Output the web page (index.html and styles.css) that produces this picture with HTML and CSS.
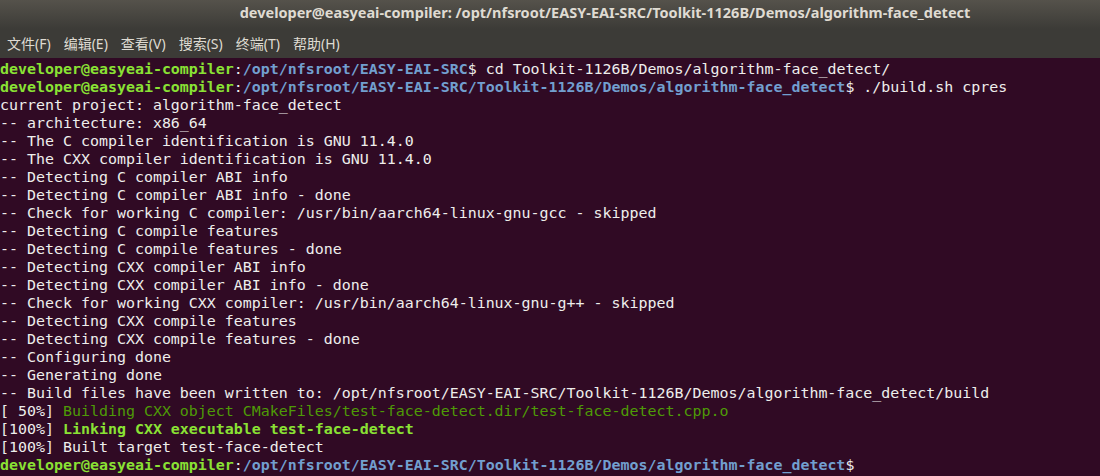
FILE: index.html
```html
<!DOCTYPE html>
<html lang="zh-CN">
<head>
    <meta charset="UTF-8">
    <title>developer@easyeai-compiler: /opt/nfsroot/EASY-EAI-SRC/Toolkit-1126B/Demos/algorithm-face_detect</title>
    <link rel="stylesheet" href="styles.css">
</head>
<body>
    <div class="window">
        <div class="titlebar">developer@easyeai-compiler: /opt/nfsroot/EASY-EAI-SRC/Toolkit-1126B/Demos/algorithm-face_detect</div>
        <nav class="menubar">
            <span class="menu-item">文件(F)</span>
            <span class="menu-item">编辑(E)</span>
            <span class="menu-item">查看(V)</span>
            <span class="menu-item">搜索(S)</span>
            <span class="menu-item">终端(T)</span>
            <span class="menu-item">帮助(H)</span>
        </nav>
        <pre class="terminal"><span class="user">developer@easyeai-compiler</span>:<span class="path">/opt/nfsroot/EASY-EAI-SRC</span>$ cd Toolkit-1126B/Demos/algorithm-face_detect/
<span class="user">developer@easyeai-compiler</span>:<span class="path">/opt/nfsroot/EASY-EAI-SRC/Toolkit-1126B/Demos/algorithm-face_detect</span>$ ./build.sh cpres
current project: algorithm-face_detect
-- architecture: x86_64
-- The C compiler identification is GNU 11.4.0
-- The CXX compiler identification is GNU 11.4.0
-- Detecting C compiler ABI info
-- Detecting C compiler ABI info - done
-- Check for working C compiler: /usr/bin/aarch64-linux-gnu-gcc - skipped
-- Detecting C compile features
-- Detecting C compile features - done
-- Detecting CXX compiler ABI info
-- Detecting CXX compiler ABI info - done
-- Check for working CXX compiler: /usr/bin/aarch64-linux-gnu-g++ - skipped
-- Detecting CXX compile features
-- Detecting CXX compile features - done
-- Configuring done
-- Generating done
-- Build files have been written to: /opt/nfsroot/EASY-EAI-SRC/Toolkit-1126B/Demos/algorithm-face_detect/build
[ 50%] <span class="build">Building CXX object CMakeFiles/test-face-detect.dir/test-face-detect.cpp.o</span>
[100%] <span class="link">Linking CXX executable test-face-detect</span>
[100%] Built target test-face-detect
<span class="user">developer@easyeai-compiler</span>:<span class="path">/opt/nfsroot/EASY-EAI-SRC/Toolkit-1126B/Demos/algorithm-face_detect</span>$</pre>
    </div>
</body>
</html>
```

FILE: styles.css
```css
body {
    margin: 0;
    padding: 0;
    background: #300a24;
    overflow: hidden;
}
.window {
    width: 1100px;
    height: 476px;
    display: flex;
    flex-direction: column;
    background: #300a24;
}
.titlebar {
    height: 29px;
    line-height: 25px;
    padding-left: 110px;
    text-align: center;
    font-family: "Noto Sans", "DejaVu Sans", sans-serif;
    font-weight: bold;
    font-size: 14.5px;
    color: #dfdbd2;
    background: linear-gradient(#55524b, #3c3b37);
    white-space: nowrap;
}
.menubar {
    height: 29px;
    display: flex;
    align-items: center;
    gap: 13px;
    padding: 0 7px;
    background: #3c3b37;
    font-family: "Noto Sans", "Noto Sans CJK SC", sans-serif;
    font-size: 14px;
    color: #dfdbd2;
}
.menu-item {
    line-height: 20px;
}
.terminal {
    margin: 0;
    padding: 2px 0 0 0;
    font-family: "DejaVu Sans Mono", monospace;
    font-size: 14.95px;
    line-height: 18px;
    color: #eeeeec;
    background: #300a24;
    white-space: pre;
}
.user {
    color: #8ae234;
    font-weight: bold;
}
.path {
    color: #729fcf;
    font-weight: bold;
}
.build {
    color: #4e9a06;
}
.link {
    color: #8ae234;
    font-weight: bold;
}
```
